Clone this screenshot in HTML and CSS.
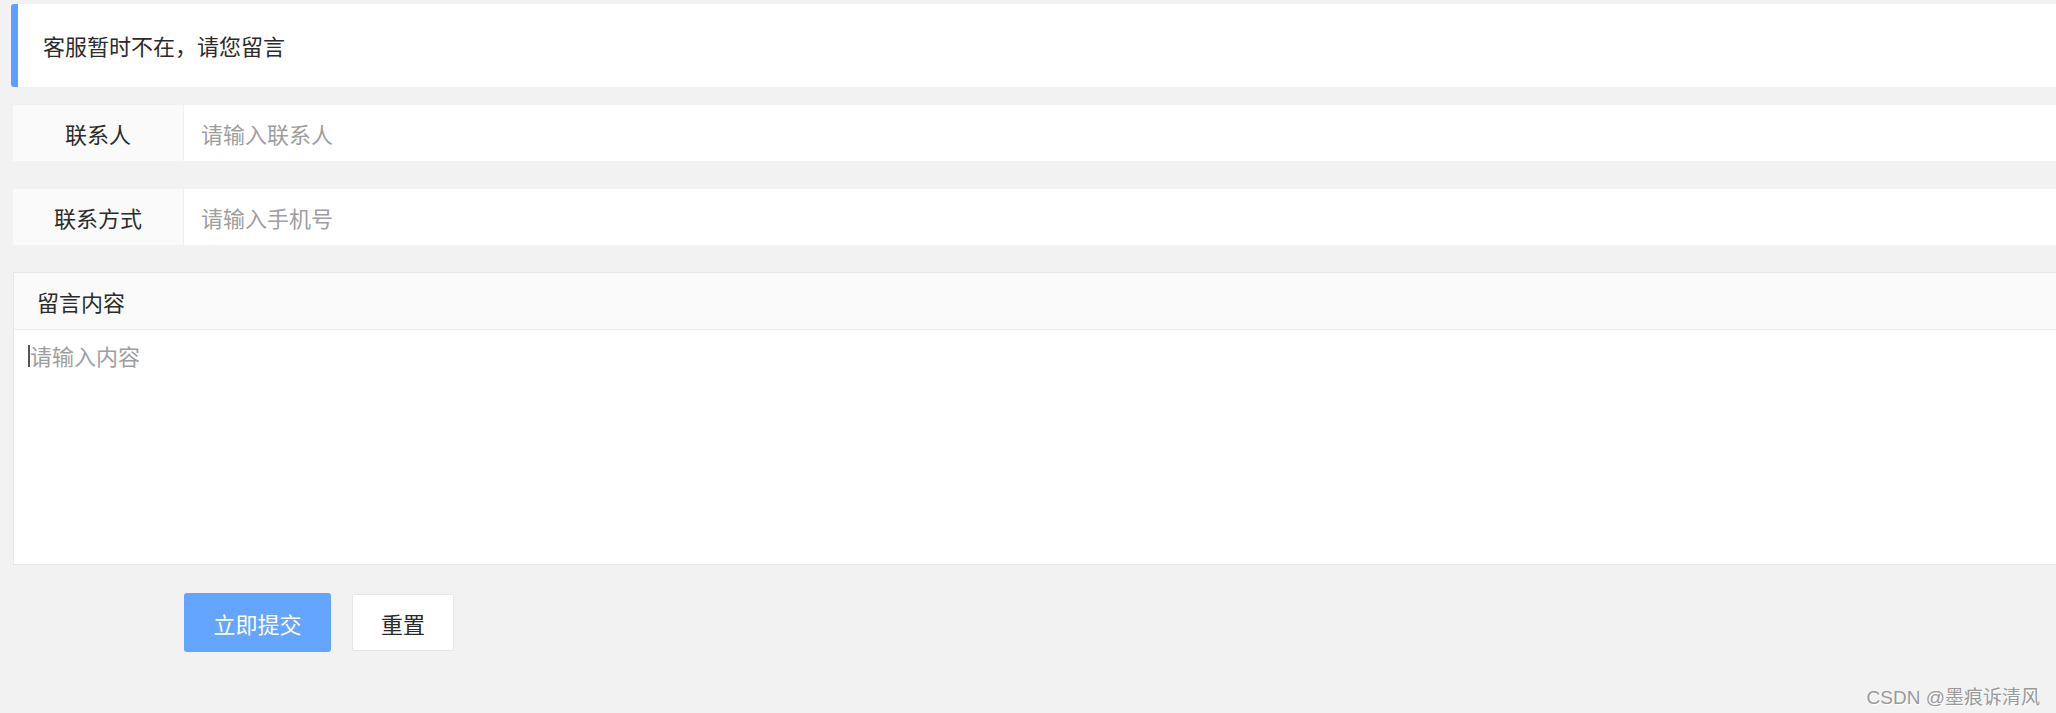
FILE: index.html
```html
<!DOCTYPE html>
<html lang="zh-CN">
<head>
  <meta charset="UTF-8">
  <meta name="viewport" content="width=device-width, initial-scale=1.0">
  <title>在线留言</title>
  <link rel="stylesheet" href="styles.css">
</head>
<body>
  <div class="page">
    <div class="notice">客服暂时不在，请您留言</div>
    <form class="msg-form" onsubmit="return false;">
      <div class="form-item">
        <label class="form-label">联系人</label>
        <input class="form-input" type="text" placeholder="请输入联系人">
      </div>
      <div class="form-item">
        <label class="form-label">联系方式</label>
        <input class="form-input" type="text" placeholder="请输入手机号">
      </div>
      <div class="form-pane">
        <div class="pane-title">留言内容</div>
        <div class="pane-body">
          <span class="caret"></span>
          <textarea class="form-textarea" placeholder="请输入内容"></textarea>
        </div>
      </div>
      <div class="form-btns">
        <button class="btn btn-primary" type="submit">立即提交</button>
        <button class="btn btn-plain" type="reset">重置</button>
      </div>
    </form>
    <div class="watermark">CSDN @墨痕诉清风</div>
  </div>
</body>
</html>
```

FILE: styles.css
```css
body {
  margin: 0;
  padding: 0;
  background-color: #f2f2f2;
  color: #2b2b2b;
  font-family: "Noto Sans CJK SC", "Noto Sans", sans-serif;
  font-size: 22px;
  overflow: hidden;
}
.page {
  position: relative;
  height: 713px;
  padding: 4px 0 0 11px;
  box-sizing: border-box;
}
.notice {
  height: 83px;
  line-height: 83px;
  background-color: #fff;
  border-left: 7px solid #5e9fff;
  border-radius: 3px 0 0 3px;
  padding-left: 25px;
}
.msg-form {
  margin: 18px 0 0 2px;
}
.form-item {
  display: flex;
  height: 56px;
  margin-bottom: 28px;
  background-color: #fff;
}
.form-item:nth-child(2) {
  margin-bottom: 27px;
}
.form-label {
  width: 171px;
  flex-shrink: 0;
  background-color: #fafafa;
  border-right: 1px solid #f0f0f0;
  box-sizing: border-box;
  text-align: center;
  line-height: 56px;
}
.form-input {
  flex: 1;
  border: none;
  outline: none;
  padding: 0 0 0 17px;
  font-family: inherit;
  font-size: 22px;
  color: #333;
  background-color: #fff;
}
.form-input::placeholder,
.form-textarea::placeholder {
  color: #9e9e9e;
}
.form-pane {
  border: 1px solid #e6e6e6;
  border-right: none;
  background-color: #fff;
}
.pane-title {
  height: 56px;
  line-height: 56px;
  padding-left: 23px;
  background-color: #fafafa;
  border-bottom: 1px solid #eee;
}
.pane-body {
  position: relative;
  height: 234px;
}
.form-textarea {
  display: block;
  width: 100%;
  height: 100%;
  box-sizing: border-box;
  border: none;
  outline: none;
  resize: none;
  padding: 9px 0 0 16px;
  font-family: inherit;
  font-size: 22px;
  color: #333;
}
.caret {
  position: absolute;
  left: 14px;
  top: 15px;
  width: 2px;
  height: 22px;
  background-color: #555;
}
.form-btns {
  display: flex;
  align-items: center;
  gap: 21px;
  margin-top: 28px;
  padding-left: 171px;
}
.btn {
  font-family: inherit;
  font-size: 22px;
  cursor: pointer;
  box-sizing: border-box;
}
.btn-primary {
  width: 147px;
  height: 59px;
  border: none;
  border-radius: 3px;
  background-color: #64a5ff;
  color: #fff;
}
.btn-plain {
  width: 102px;
  height: 57px;
  border: 1px solid #e6e6e6;
  border-radius: 2px;
  background-color: #fff;
  color: #2b2b2b;
}
.watermark {
  position: absolute;
  right: 16px;
  bottom: 4px;
  font-family: "Liberation Sans", "Noto Sans CJK SC", sans-serif;
  font-size: 19px;
  color: #9a9a9a;
  text-shadow: 1px 1px 1px #fff;
}
```
